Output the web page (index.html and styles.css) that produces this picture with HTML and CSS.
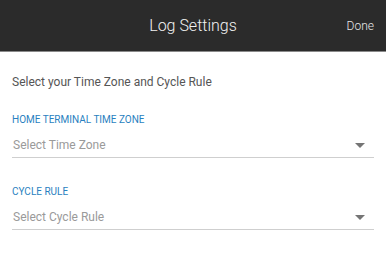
FILE: index.html
```html
<!DOCTYPE html>
<html>
<head>
<meta charset="utf-8">
<link rel="stylesheet" href="styles.css">
</head>
<body>
<header class="bar">
  <div class="title">Log Settings</div>
  <div class="done">Done</div>
</header>
<main class="content">
  <p class="intro">Select your Time Zone and Cycle Rule</p>
  <div class="field">
    <div class="label">HOME TERMINAL TIME ZONE</div>
    <div class="select">
      <span class="placeholder">Select Time Zone</span>
      <svg class="arrow" width="10" height="5" viewBox="0 0 10 5"><path d="M0 0H10L5 5Z" fill="#757575"/></svg>
    </div>
  </div>
  <div class="field">
    <div class="label">CYCLE RULE</div>
    <div class="select">
      <span class="placeholder">Select Cycle Rule</span>
      <svg class="arrow" width="10" height="5" viewBox="0 0 10 5"><path d="M0 0H10L5 5Z" fill="#757575"/></svg>
    </div>
  </div>
</main>
</body>
</html>
```
FILE: styles.css
```css
html, body {
  margin: 0;
  padding: 0;
  background: #fff;
  font-family: Roboto, "Liberation Sans", sans-serif;
}
.bar {
  height: 51px;
  background: #2b2b2b;
  border-bottom: 1px solid #8a8a8a;
  display: flex;
  align-items: center;
  justify-content: center;
  position: relative;
}
.title {
  color: #f2f2f2;
  font-size: 16px;
  font-weight: 300;
}
.done {
  position: absolute;
  right: 12px;
  top: 0;
  height: 51px;
  display: flex;
  align-items: center;
  color: #e8e8e8;
  font-size: 12px;
  font-weight: 300;
}
.content {
  padding: 0 12px;
}
.intro {
  margin: 23px 0 0;
  font-size: 12px;
  color: #555;
  line-height: 15px;
}
.field {
  margin-top: 23px;
}
.field + .field {
  margin-top: 27px;
}
.label {
  font-size: 10px;
  color: #2a7fc0;
  line-height: 13px;
}
.select {
  margin-top: 11px;
  display: flex;
  align-items: center;
  justify-content: space-between;
  border-bottom: 1px solid #cfcfcf;
  padding: 0 9px 4px 1px;
}
.placeholder {
  font-size: 12px;
  color: #9a9a9a;
  line-height: 16px;
}
.arrow {
  display: block;
}
```
